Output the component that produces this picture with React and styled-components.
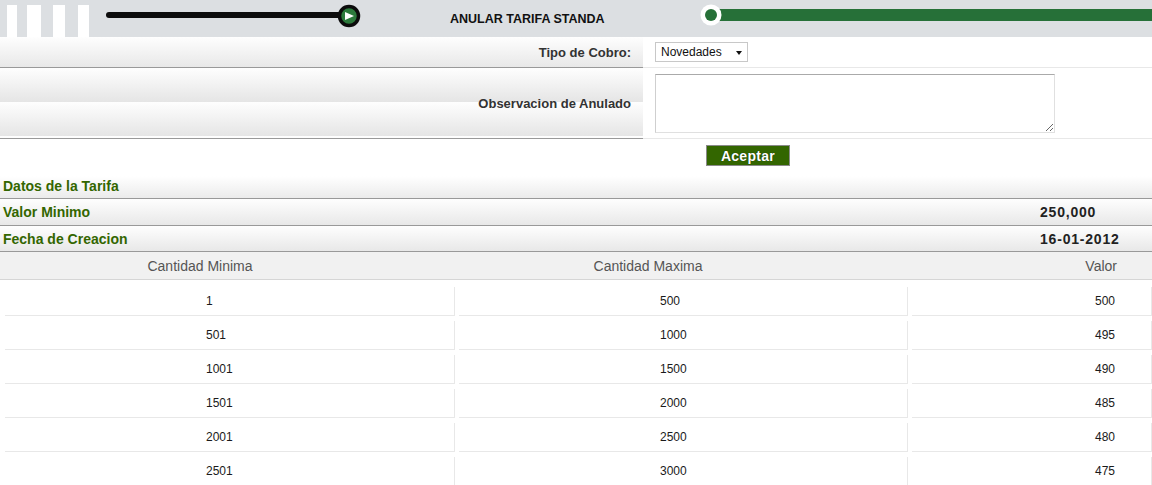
import React from "react";
import styled, { createGlobalStyle } from "styled-components";

const Global = createGlobalStyle`
  body {
    margin: 0;
    background: #fff;
    font-family: "Liberation Sans", Arial, sans-serif;
  }
`;

const Page = styled.div`
  width: 1152px;
  height: 485px;
  overflow: hidden;
`;

const Header = styled.div`
  display: flex;
  height: 37px;
  background: #dcdfe2;
  overflow: hidden;
`;

const Stripes = styled.div`
  display: flex;
  align-self: flex-end;
  height: 32px;
  width: 100px;
  flex-shrink: 0;
`;

const Stripe = styled.span`
  display: block;
  background: #fff;
  width: ${(p) => p.$w}px;
  margin-left: ${(p) => p.$gap}px;
`;

const Title = styled.div`
  margin-left: 85px;
  align-self: center;
  padding-top: 1px;
  font-size: 12.5px;
  font-weight: bold;
  color: #111;
  white-space: nowrap;
  width: 165px;
  flex-shrink: 0;
`;

const Track = styled.svg`
  display: block;
  flex-shrink: 0;
`;

const FormRow = styled.div`
  display: grid;
  grid-template-columns: 643px 1fr;
  height: ${(p) => p.$h}px;
`;

const Label = styled.div`
  display: flex;
  align-items: center;
  justify-content: flex-end;
  padding-right: 12px;
  font-size: 13px;
  font-weight: bold;
  color: #333;
  background: linear-gradient(#fefefe, #e5e5e5) 0 0 / 100% 34px repeat-y;
  border-bottom: 1px solid #999;
`;

const Field = styled.div`
  display: flex;
  align-items: center;
  padding-left: 12px;
  border-bottom: 1px solid #e8e8e8;
`;

const SelectBox = styled.div`
  position: relative;
  width: 93px;
  height: 20px;

  &::after {
    content: "";
    position: absolute;
    right: 6px;
    top: 9px;
    border-left: 3.5px solid transparent;
    border-right: 3.5px solid transparent;
    border-top: 4px solid #111;
    pointer-events: none;
  }
`;

const Select = styled.select`
  appearance: none;
  width: 100%;
  height: 100%;
  border: 1px solid #c8c8c8;
  border-radius: 0;
  background: #fff;
  padding: 0 0 0 5px;
  font-family: inherit;
  font-size: 12px;
  color: #111;
  outline: none;
`;

const TextArea = styled.textarea`
  width: 400px;
  height: 59px;
  box-sizing: border-box;
  border: 1px solid #e0e0e0;
  border-top-color: #aaa;
  border-left-color: #cfcfcf;
  font-family: inherit;
  font-size: 12px;
  margin: 0;
  resize: both;
`;

const ButtonBar = styled.div`
  display: flex;
  padding: 6px 0 8px 706px;
`;

const Button = styled.button`
  width: 84px;
  height: 21px;
  padding: 0;
  background: #336600;
  border: 1px solid #8a8a8a;
  color: #fff;
  font-family: inherit;
  font-size: 14px;
  font-weight: bold;
  letter-spacing: 0.3px;
  text-shadow: 0 0 1px #0b2200;
`;

const InfoRow = styled.div`
  display: grid;
  grid-template-columns: 1fr 112px;
  align-items: center;
  height: ${(p) => p.$h}px;
  background: ${(p) => (p.$fade ? "linear-gradient(#fff, #fff 10%, #ebebeb)" : "linear-gradient(#fefefe, #e8e8e8)")};
  border-bottom: 1px solid #999;
`;

const InfoLabel = styled.div`
  padding-left: 3px;
  font-size: 14px;
  font-weight: bold;
  color: #336600;
`;

const InfoValue = styled.div`
  font-size: 14px;
  font-weight: bold;
  letter-spacing: 0.8px;
  color: #222;
`;

const HeadRow = styled.div`
  display: grid;
  grid-template-columns: 400px 496px 1fr;
  align-items: center;
  height: 27px;
  background: #f1f1f1;
  border-bottom: 1px solid #d6d6d6;
  font-size: 14px;
  color: #555;
`;

const HeadCell = styled.div`
  text-align: ${(p) => p.$align || "center"};
  padding-right: ${(p) => (p.$align === "right" ? "35px" : "0")};
`;

const Body = styled.div`
  padding: 7px 0 0 5px;
  display: flex;
  flex-direction: column;
  gap: 5px;
`;

const DataRow = styled.div`
  display: grid;
  grid-template-columns: 450px 449px 1fr;
  column-gap: 4px;
`;

const Cell = styled.div`
  height: 28px;
  display: flex;
  align-items: center;
  justify-content: ${(p) => (p.$right ? "flex-end" : "flex-start")};
  padding: ${(p) => (p.$right ? "0 36px 0 0" : "0 0 0 201px")};
  border-right: 1px solid #e8e8e8;
  border-bottom: 1px solid #e8e8e8;
  font-size: 12px;
  color: #1a1a1a;
`;

const rows = [
  ["1", "500", "500"],
  ["501", "1000", "495"],
  ["1001", "1500", "490"],
  ["1501", "2000", "485"],
  ["2001", "2500", "480"],
  ["2501", "3000", "475"],
];

const stripes = [
  { w: 10, gap: 7 },
  { w: 14, gap: 10 },
  { w: 12, gap: 12 },
  { w: 11, gap: 13 },
];

export default function App() {
  return (
    <Page>
      <Global />
      <Header>
        <Stripes>
          {stripes.map((s, i) => (
            <Stripe key={i} $w={s.w} $gap={s.gap} />
          ))}
        </Stripes>
        <Track width="265" height="37" viewBox="100 0 265 37">
          <line x1="109" y1="15" x2="342" y2="15" stroke="#0c0c0c" strokeWidth="6" strokeLinecap="round" />
          <circle cx="349" cy="16" r="9.5" fill="#2c7a3c" stroke="#0c0c0c" strokeWidth="3.5" />
          <polygon points="345,12 354,16 345,20" fill="#fff" />
        </Track>
        <Title>ANULAR TARIFA STANDA</Title>
        <Track width="537" height="37" viewBox="615 0 537 37">
          <rect x="718" y="9" width="440" height="12" fill="#267038" />
          <circle cx="711" cy="15" r="10.5" fill="#fff" />
          <circle cx="711" cy="15" r="6" fill="#267038" />
        </Track>
      </Header>

      <FormRow $h={31}>
        <Label>Tipo de Cobro:</Label>
        <Field>
          <SelectBox>
            <Select defaultValue="nov">
              <option value="nov">Novedades</option>
            </Select>
          </SelectBox>
        </Field>
      </FormRow>
      <FormRow $h={71}>
        <Label>Observacion de Anulado</Label>
        <Field>
          <TextArea />
        </Field>
      </FormRow>

      <ButtonBar>
        <Button>Aceptar</Button>
      </ButtonBar>

      <InfoRow $h={24} $fade>
        <InfoLabel>Datos de la Tarifa</InfoLabel>
        <InfoValue />
      </InfoRow>
      <InfoRow $h={26}>
        <InfoLabel>Valor Minimo</InfoLabel>
        <InfoValue>250,000</InfoValue>
      </InfoRow>
      <InfoRow $h={25}>
        <InfoLabel>Fecha de Creacion</InfoLabel>
        <InfoValue>16-01-2012</InfoValue>
      </InfoRow>

      <HeadRow>
        <HeadCell>Cantidad Minima</HeadCell>
        <HeadCell>Cantidad Maxima</HeadCell>
        <HeadCell $align="right">Valor</HeadCell>
      </HeadRow>
      <Body>
        {rows.map((r, i) => (
          <DataRow key={i}>
            <Cell>{r[0]}</Cell>
            <Cell>{r[1]}</Cell>
            <Cell $right>{r[2]}</Cell>
          </DataRow>
        ))}
      </Body>
    </Page>
  );
}
